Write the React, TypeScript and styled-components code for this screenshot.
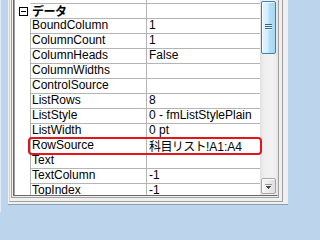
import React from "react";
import styled, { createGlobalStyle } from "styled-components";

const Global = createGlobalStyle`
  html, body { margin: 0; padding: 0; overflow: hidden; background: #bcd4ec; }
  #root { width: 288px; height: 212px; }
`;

const LINE = "#b4b4b4";

const Frame = styled.div`
  width: 288px;
  height: 212px;
  box-sizing: border-box;
  background: #bcd4ec;
  border-left: 1px solid #e2ecf6;
  padding-left: 7px;
  display: flex;
  flex-direction: column;
  overflow: hidden;
`;

const Window = styled.div`
  height: 205px;
  box-sizing: border-box;
  background: #f0f0f0;
  border-bottom: 1px solid #8a9db3;
  padding: 0 5px 2px 1px;
  display: flex;
`;

const Pane = styled.div`
  flex: 1;
  display: flex;
  box-sizing: border-box;
  border-left: 1px solid #d4d4d4;
  border-right: 1px solid #a0a0a0;
  border-bottom: 1px solid #a0a0a0;
  padding: 0 3px 3px 1px;
`;

const ListOuter = styled.div`
  flex: 1;
  display: flex;
  box-sizing: border-box;
  border-left: 1px solid #a0a0a0;
  border-right: 1px solid #a0a0a0;
  border-bottom: 1px solid #a0a0a0;
  padding: 0 0 1px 1px;
`;

const ListInner = styled.div`
  position: relative;
  flex: 1;
  display: flex;
  box-sizing: border-box;
  border-left: 1px solid #696969;
  border-right: 1px solid #e3e3e3;
  border-bottom: 1px solid #696969;
  overflow: hidden;
`;

const Grid = styled.div`
  width: 246px;
  box-sizing: border-box;
  border-left: 1px solid #a0a0a0;
  background: #fff;
  display: flex;
  flex-direction: column;
  font-family: "Liberation Sans", sans-serif;
  font-size: 12px;
  color: #000;
`;

const Row = styled.div<{ $h?: number }>`
  display: grid;
  grid-template-columns: 15px 116px 1fr;
  height: ${(p) => p.$h ?? 15}px;
  flex: none;
`;

const Gutter = styled.div`
  display: flex;
  align-items: center;
  padding-left: 4px;
`;

const Cell = styled.div<{ $noLeft?: boolean }>`
  box-sizing: border-box;
  border-left: 1px solid ${(p) => (p.$noLeft ? "transparent" : LINE)};
  border-bottom: 1px solid ${LINE};
  padding-left: 1px;
  line-height: 13px;
  white-space: nowrap;
`;

const ValueCell = styled(Cell)`
  padding-left: 2px;
`;

const CatName = styled(Cell)`
  font-family: "Noto Sans CJK JP", sans-serif;
  font-weight: 700;
  font-size: 12px;
  line-height: 14px;
  letter-spacing: -0.5px;
`;

const Jp = styled.span`
  font-family: "Noto Sans CJK JP", sans-serif;
  letter-spacing: -0.6px;
`;

const ScrollBar = styled.div`
  width: 17px;
  flex: none;
  display: flex;
  flex-direction: column;
  justify-content: space-between;
  align-items: center;
  background: linear-gradient(90deg, #e2e2e2 0%, #efefef 25%, #f2f2f2 75%, #e9e9e9 100%);
`;

const Thumb = styled.div`
  margin-top: 1px;
  width: 15px;
  height: 53px;
  box-sizing: border-box;
  border: 1px solid #3c7fb1;
  border-radius: 2px;
  background: linear-gradient(90deg, #e4f5fd 0%, #d2edfb 45%, #b3dff7 55%, #a6d9f4 100%);
  box-shadow: inset 1px 1px 0 #f6fbfe;
  display: flex;
  align-items: center;
  justify-content: center;
`;

const ArrowButton = styled.div`
  width: 15px;
  height: 16px;
  margin-bottom: 1px;
  box-sizing: border-box;
  border: 1px solid #a7a7a7;
  border-radius: 2px;
  background: linear-gradient(90deg, #f6f6f6 0%, #ececec 50%, #dedede 100%);
  box-shadow: inset 1px 1px 0 #fcfcfc;
  display: flex;
  align-items: center;
  justify-content: center;
`;

const Highlight = styled.div`
  position: absolute;
  left: 14px;
  top: 137px;
  width: 234px;
  height: 18px;
  box-sizing: border-box;
  border: 2px solid #e5141b;
  border-radius: 4px;
  pointer-events: none;
`;

const rows: [string, string][] = [
  ["BoundColumn", "1"],
  ["ColumnCount", "1"],
  ["ColumnHeads", "False"],
  ["ColumnWidths", ""],
  ["ControlSource", ""],
  ["ListRows", "8"],
  ["ListStyle", "0 - fmListStylePlain"],
  ["ListWidth", "0 pt"],
  ["RowSource", "__RS__"],
  ["Text", ""],
  ["TextColumn", "-1"],
  ["TopIndex", "-1"],
];

const Collapse = () => (
  <svg width="9" height="9" viewBox="0 0 9 9" shapeRendering="crispEdges">
    <rect x="0.5" y="0.5" width="8" height="8" fill="#fff" stroke="#000" />
    <line x1="2" y1="4.5" x2="7" y2="4.5" stroke="#000" />
  </svg>
);

const Grip = () => (
  <svg width="7" height="7" viewBox="0 0 7 7" shapeRendering="crispEdges">
    <line x1="0" y1="0.5" x2="7" y2="0.5" stroke="#2f6590" />
    <line x1="0" y1="1.5" x2="7" y2="1.5" stroke="#e8f6fd" />
    <line x1="0" y1="2.5" x2="7" y2="2.5" stroke="#2f6590" />
    <line x1="0" y1="3.5" x2="7" y2="3.5" stroke="#e8f6fd" />
    <line x1="0" y1="4.5" x2="7" y2="4.5" stroke="#2f6590" />
    <line x1="0" y1="5.5" x2="7" y2="5.5" stroke="#e8f6fd" />
  </svg>
);

const DownGlyph = () => (
  <svg width="7" height="5" viewBox="0 0 7 5" shapeRendering="crispEdges">
    <line x1="0" y1="0.5" x2="7" y2="0.5" stroke="#9a9a9a" />
    <path d="M1 2h5l-2.5 3z" fill="#4a4a4a" />
  </svg>
);

export default function App() {
  return (
    <>
      <Global />
      <Frame>
        <Window>
          <Pane>
            <ListOuter>
              <ListInner>
                <Grid>
                  <Row $h={4}>
                    <Gutter />
                    <Cell $noLeft />
                    <ValueCell />
                  </Row>
                  <Row>
                    <Gutter>
                      <Collapse />
                    </Gutter>
                    <CatName $noLeft>データ</CatName>
                    <ValueCell />
                  </Row>
                  {rows.map(([name, value]) => (
                    <Row key={name}>
                      <Gutter />
                      <Cell>{name}</Cell>
                      <ValueCell>
                        {value === "__RS__" ? (
                          <>
                            <Jp>科目リスト</Jp>!A1:A4
                          </>
                        ) : (
                          value
                        )}
                      </ValueCell>
                    </Row>
                  ))}
                </Grid>
                <ScrollBar>
                  <Thumb>
                    <Grip />
                  </Thumb>
                  <ArrowButton>
                    <DownGlyph />
                  </ArrowButton>
                </ScrollBar>
                <Highlight />
              </ListInner>
            </ListOuter>
          </Pane>
        </Window>
      </Frame>
    </>
  );
}
